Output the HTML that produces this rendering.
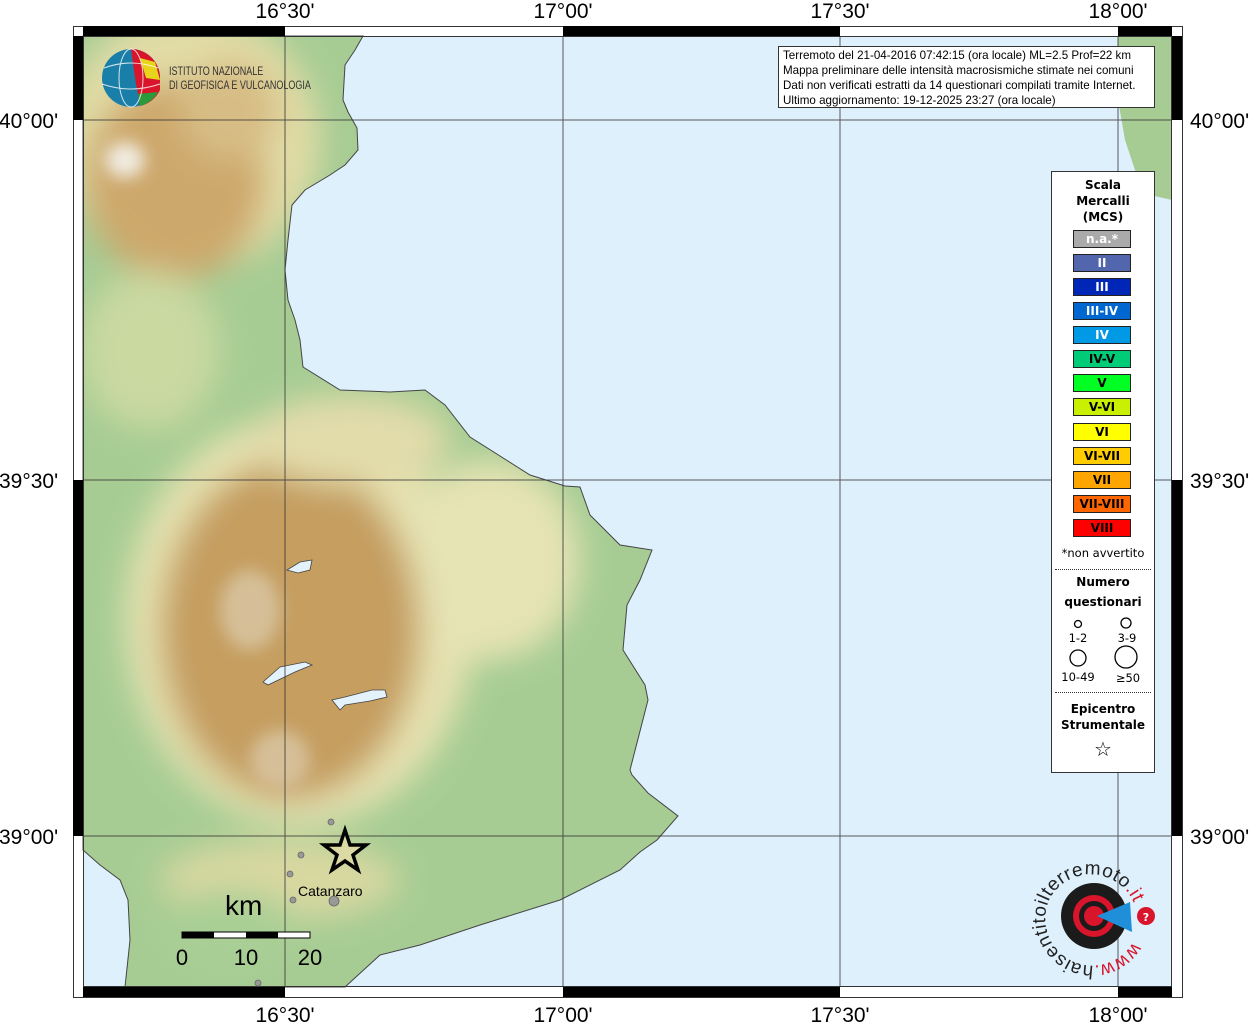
<!DOCTYPE html>
<html><head><meta charset="utf-8"><style>
body{margin:0;width:1255px;height:1024px;background:#fff;overflow:hidden;font-family:"DejaVu Sans","Liberation Sans",sans-serif}
svg{position:absolute;left:0;top:0}
.lg{position:absolute;left:1051px;top:171px;width:102px;height:600px;border:1px solid #333;background:#fff;font-size:12px;text-align:center}
.b{position:absolute;left:21px;width:56px;height:16px;border:1px solid #222;font-weight:bold;font-size:12px;line-height:16px}
.info{position:absolute;left:778px;top:46px;width:377px;height:62px;border:1px solid #333;background:#fff;font-family:"Liberation Sans",sans-serif;font-size:11.6px;line-height:15px;padding-left:4px;box-sizing:border-box;padding-top:1px;white-space:nowrap;overflow:hidden}
</style></head><body>
<svg width="1255" height="1024" viewBox="0 0 1255 1024">
<defs>
<clipPath id="land"><path id="lp" d="M83,36 L363,36 355,50 345,65 343,100 348,112 357,128 358,150 345,165 330,175 305,190 292,205 288,240 285,270 288,300 295,320 300,340 303,367 340,390 390,392 425,390 445,405 470,437 530,475 565,486 580,487 590,515 620,545 652,550 640,580 627,605 623,650 645,685 648,700 630,770 632,775 648,793 678,816 657,840 640,852 620,870 560,900 480,925 420,945 380,955 345,987 125,987 130,940 128,900 120,880 100,865 83,850 Z"/></clipPath>
<filter id="bl" x="-50%" y="-50%" width="200%" height="200%"><feGaussianBlur stdDeviation="16"/></filter>
<filter id="bl2" x="-50%" y="-50%" width="200%" height="200%"><feGaussianBlur stdDeviation="8"/></filter>
</defs>
<rect x="83" y="36" width="1089" height="951" fill="#dff0fd"/>
<g clip-path="url(#land)">
<rect x="83" y="36" width="600" height="951" fill="#a6cc94"/>
<g filter="url(#bl)">
<ellipse cx="190" cy="140" rx="130" ry="130" fill="#e2dca6"/>
<ellipse cx="175" cy="180" rx="90" ry="100" fill="#cda86c"/>
<ellipse cx="230" cy="110" rx="50" ry="50" fill="#d7bd85"/>
<ellipse cx="150" cy="350" rx="70" ry="80" fill="#c9d9a0"/>
<ellipse cx="300" cy="620" rx="175" ry="205" fill="#e6e2b0"/>
<ellipse cx="490" cy="560" rx="90" ry="100" fill="#e6e3b4"/>
<ellipse cx="290" cy="630" rx="130" ry="170" fill="#c59e60"/>
<ellipse cx="350" cy="440" rx="100" ry="45" fill="#e2dcaa"/>
<ellipse cx="280" cy="880" rx="120" ry="40" fill="#d8d8a0"/>
<ellipse cx="230" cy="930" rx="70" ry="40" fill="#a9cf95"/>
</g>
<g filter="url(#bl2)">
<ellipse cx="125" cy="160" rx="20" ry="18" fill="#f0ebe0"/>
<ellipse cx="250" cy="610" rx="30" ry="40" fill="#d6bf98"/>
<ellipse cx="280" cy="760" rx="30" ry="30" fill="#d6bf98"/>
</g>
</g>
<path d="M1118,36 L1172,36 1172,200 1150,195 1135,170 1125,140 1118,100 Z" fill="#a6cc94"/>
<use href="#lp" fill="none" stroke="#444" stroke-width="1"/>
<path d="M287,570 L300,562 312,560 310,570 298,573 Z" fill="#e3f2fb" stroke="#444" stroke-width="0.8"/>
<path d="M263,682 L280,667 305,662 312,665 295,672 268,685 Z" fill="#e3f2fb" stroke="#444" stroke-width="0.8"/>
<path d="M332,700 L345,697 372,690 385,690 387,697 370,701 345,705 340,710 Z" fill="#e3f2fb" stroke="#444" stroke-width="0.8"/>
<g stroke="#333" stroke-width="1" opacity="0.8">
<line x1="285" y1="36" x2="285" y2="987"/><line x1="563" y1="36" x2="563" y2="987"/><line x1="840" y1="36" x2="840" y2="987"/><line x1="1118" y1="36" x2="1118" y2="987"/>
<line x1="83" y1="120" x2="1172" y2="120"/><line x1="83" y1="480" x2="1172" y2="480"/><line x1="83" y1="836" x2="1172" y2="836"/>
</g>
<rect x="73.5" y="26.5" width="1109" height="971" fill="none" stroke="#333"/>
<g fill="#000">
<rect x="83" y="26" width="202" height="10"/><rect x="563" y="26" width="277" height="10"/><rect x="1118" y="26" width="54" height="10"/>
<rect x="83" y="987" width="202" height="10"/><rect x="563" y="987" width="277" height="10"/><rect x="1118" y="987" width="54" height="10"/>
<rect x="73" y="36" width="10" height="84"/><rect x="73" y="480" width="10" height="356"/>
<rect x="1172" y="36" width="10" height="84"/><rect x="1172" y="480" width="10" height="356"/>
</g>
<rect x="83.5" y="36.5" width="1088" height="950" fill="none" stroke="#333"/>
<g font-family="Liberation Sans,sans-serif" font-size="21" fill="#000">
<text x="285" y="18" text-anchor="middle">16°30'</text><text x="563" y="18" text-anchor="middle">17°00'</text><text x="840" y="18" text-anchor="middle">17°30'</text><text x="1118" y="18" text-anchor="middle">18°00'</text>
<text x="285" y="1022" text-anchor="middle">16°30'</text><text x="563" y="1022" text-anchor="middle">17°00'</text><text x="840" y="1022" text-anchor="middle">17°30'</text><text x="1118" y="1022" text-anchor="middle">18°00'</text>
<text x="-1" y="128">40°00'</text><text x="-1" y="488">39°30'</text><text x="-1" y="844">39°00'</text>
<text x="1190" y="128">40°00'</text><text x="1190" y="488">39°30'</text><text x="1190" y="844">39°00'</text>
</g>
<!-- INGV logo -->
<circle cx="131" cy="78" r="29" fill="#1a7fa8"/>
<path d="M131,49 A29,29 0 0 1 160,78 L160,90 A29,29 0 0 1 140,106 L135,78 Z" fill="#d8152b"/>
<path d="M140,58 L155,62 L160,80 L146,78 Z" fill="#e8d41a"/>
<path d="M138,94 L158,92 A29,29 0 0 1 140,106 Z" fill="#2a9a3a"/>
<g fill="none" stroke="#fff" stroke-width="1" opacity="0.8"><ellipse cx="131" cy="78" rx="12" ry="29"/><path d="M104,68 Q131,58 158,68 M102,84 Q131,94 160,84"/></g>
<g font-family="Liberation Sans,sans-serif" font-size="12" fill="#333" transform="translate(169,0) scale(0.75,1)">
<text x="0" y="75">ISTITUTO NAZIONALE</text>
<text x="0" y="89">DI GEOFISICA E VULCANOLOGIA</text></g>
<!-- towns -->
<g fill="#999" stroke="#666" stroke-width="0.8"><circle cx="331" cy="822" r="3"/><circle cx="301" cy="855" r="3"/><circle cx="290" cy="874" r="3"/><circle cx="293" cy="900" r="3"/><circle cx="334" cy="901" r="5"/><circle cx="258" cy="983" r="3"/></g>
<text x="298" y="896" font-family="Liberation Sans,sans-serif" font-size="14">Catanzaro</text>
<path d="M345,830 L350,845 366,845 353,855 358,870 345,861 332,870 337,855 324,845 340,845 Z" fill="#ddd9a5" stroke="#000" stroke-width="3.5" stroke-linejoin="miter"/>
<text x="225" y="915" font-family="Liberation Sans,sans-serif" font-size="28">km</text>
<rect x="182" y="932" width="128" height="6" fill="#fff" stroke="#000"/>
<rect x="182" y="932" width="32" height="6" fill="#000"/><rect x="246" y="932" width="32" height="6" fill="#000"/>
<g font-family="Liberation Sans,sans-serif" font-size="22" text-anchor="middle"><text x="182" y="965">0</text><text x="246" y="965">10</text><text x="310" y="965">20</text></g>
<!-- haisentito logo -->
<circle cx="1094" cy="916" r="33" fill="#1b1b1b"/>
<circle cx="1094" cy="916" r="21" fill="#d8152b"/><circle cx="1094" cy="916" r="15" fill="#1b1b1b"/><circle cx="1094" cy="916" r="10" fill="#d8152b"/>
<path d="M1097,916 L1130,902 L1132,932 Z" fill="#1e8fd8"/>
<circle cx="1146" cy="916" r="9" fill="#d8152b"/><text x="1146" y="921" font-size="11" fill="#fff" text-anchor="middle" font-weight="bold">?</text>
<path id="arc" d="M1133,942 A47,47 0 0 1 1050,898 A47,47 0 0 1 1133,942" fill="none"/>
<text font-family="Liberation Sans,sans-serif" font-size="19" fill="#222" letter-spacing="0.6"><textPath href="#arc"><tspan fill="#d8152b">www.</tspan>haisentitoilterremoto<tspan fill="#d8152b">.it</tspan></textPath></text>
</svg>
<div class="info">Terremoto del 21-04-2016 07:42:15 (ora locale) ML=2.5 Prof=22 km<br>Mappa preliminare delle intensità macrosismiche stimate nei comuni<br>Dati non verificati estratti da 14 questionari compilati tramite Internet.<br>Ultimo aggiornamento: 19-12-2025 23:27 (ora locale)</div>
<div class="lg">
<div style="position:absolute;top:5px;width:100%;font-weight:bold;line-height:16px">Scala<br>Mercalli<br>(MCS)</div>
<div class="b" style="top:58px;background:#aaa;color:#fff">n.a.*</div>
<div class="b" style="top:82px;background:#5266ad;color:#fff">II</div>
<div class="b" style="top:106px;background:#0026b8;color:#fff">III</div>
<div class="b" style="top:130px;background:#0066d0;color:#fff">III-IV</div>
<div class="b" style="top:154px;background:#0099e6;color:#fff">IV</div>
<div class="b" style="top:178px;background:#00cc77">IV-V</div>
<div class="b" style="top:202px;background:#00ff22">V</div>
<div class="b" style="top:226px;background:#c8f000">V-VI</div>
<div class="b" style="top:251px;background:#ffff00">VI</div>
<div class="b" style="top:275px;background:#ffcc00">VI-VII</div>
<div class="b" style="top:299px;background:#ffa500">VII</div>
<div class="b" style="top:323px;background:#ff6600">VII-VIII</div>
<div class="b" style="top:347px;background:#ff0000">VIII</div>
<div style="position:absolute;top:374px;width:100%;font-size:11.5px">*non avvertito</div>
<div style="position:absolute;top:397px;left:3px;right:3px;border-top:1px dotted #333"></div>
<div style="position:absolute;top:400px;width:100%;font-weight:bold;line-height:20px">Numero<br>questionari</div>
<svg style="position:absolute;left:0;top:440px" width="102" height="80"><g fill="none" stroke="#000" stroke-width="1.3"><circle cx="26" cy="12" r="3.5"/><circle cx="74" cy="11" r="5"/><circle cx="26" cy="46" r="8"/><circle cx="74" cy="45" r="11"/></g><g font-size="11.5" text-anchor="middle" font-family="DejaVu Sans,sans-serif"><text x="26" y="30">1-2</text><text x="75" y="30">3-9</text><text x="26" y="69">10-49</text><text x="76" y="70">≥50</text></g></svg>
<div style="position:absolute;top:520px;left:3px;right:3px;border-top:1px dotted #333"></div>
<div style="position:absolute;top:529px;width:100%;font-weight:bold;line-height:16px">Epicentro<br>Strumentale</div>
<div style="position:absolute;top:565px;width:100%;font-size:20px">☆</div>
</div>
</body></html>
